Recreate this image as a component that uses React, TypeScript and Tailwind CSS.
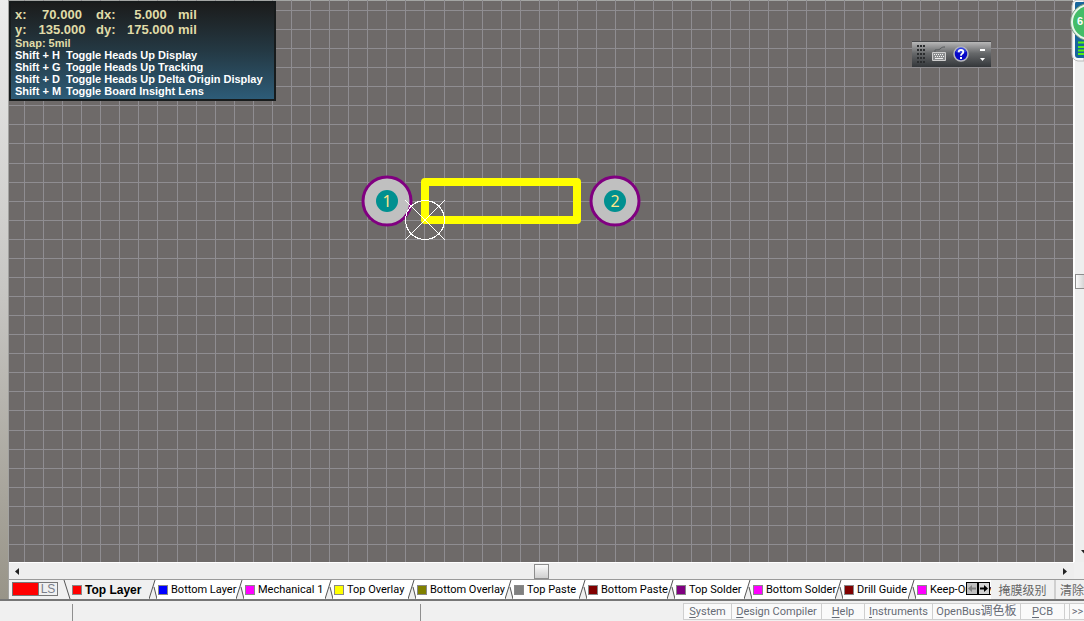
import { useState } from "react"
import clsx from "clsx"

const layers = [
	{ name: "Top Layer", color: "bg-[#ff0000]", width: "w-[86px]" },
	{ name: "Bottom Layer", color: "bg-[#0000ff]", width: "w-[87px]" },
	{ name: "Mechanical 1", color: "bg-[#ff00ff]", width: "w-[89px]" },
	{ name: "Top Overlay", color: "bg-[#ffff00]", width: "w-[83px]" },
	{ name: "Bottom Overlay", color: "bg-[#808000]", width: "w-[97px]" },
	{ name: "Top Paste", color: "bg-[#808080]", width: "w-[74px]" },
	{ name: "Bottom Paste", color: "bg-[#800000]", width: "w-[88px]" },
	{ name: "Top Solder", color: "bg-[#800080]", width: "w-[77px]" },
	{ name: "Bottom Solder", color: "bg-[#ff00ff]", width: "w-[91px]" },
	{ name: "Drill Guide", color: "bg-[#800000]", width: "w-[73px]" },
	{ name: "Keep-Out Layer", color: "bg-[#ff00ff]", width: "w-[83px]" },
]

const shortcuts = [
	{ keys: "Shift + H", action: "Toggle Heads Up Display" },
	{ keys: "Shift + G", action: "Toggle Heads Up Tracking" },
	{ keys: "Shift + D", action: "Toggle Heads Up Delta Origin Display" },
	{ keys: "Shift + M", action: "Toggle Board Insight Lens" },
]

const panels = [
	{ hot: "S", rest: "ystem", width: "w-[48px]" },
	{ hot: "D", rest: "esign Compiler", width: "w-[90px]" },
	{ hot: "H", rest: "elp", width: "w-[43px]" },
	{ hot: "I", rest: "nstruments", width: "w-[68px]" },
	{ hot: "", rest: "OpenBus", cjk: "调色板", width: "w-[88px]" },
	{ hot: "P", rest: "CB", width: "w-[44px]" },
]

// 5 mil snap grid in screen pixels
const GRID_STEP = 19.07
const gridX = Array.from({ length: 140 }, (_, i) => Math.round(15 + i * GRID_STEP))
const gridY = Array.from({ length: 80 }, (_, i) => Math.round(10 + i * GRID_STEP))

function Pad({ x, label }: { x: number; label: string }) {
	return (
		<g>
			<circle cx={x} cy="201" r="24" fill="#c0c0c0" stroke="#800080" strokeWidth="3" />
			<circle cx={x} cy="201" r="11" fill="#009090" />
			<text
				x={x}
				y="207"
				textAnchor="middle"
				className="fill-[#ffe58a] font-['Noto_Sans',sans-serif] text-[16px]"
			>
				{label}
			</text>
		</g>
	)
}

function Board() {
	return (
		<svg className="absolute inset-0 h-full w-full" aria-label="Footprint">
			<g fill="#8f8d91">
				{gridX.map((x) => (
					<rect key={x} x={x} y="0" width="1" height="100%" />
				))}
				{gridY.map((y) => (
					<rect key={y} x="0" y={y} width="100%" height="1" />
				))}
			</g>
			<Pad x={378} label="1" />
			<Pad x={606} label="2" />
			<rect
				x="416"
				y="182"
				width="152"
				height="38"
				fill="none"
				stroke="#ffff00"
				strokeWidth="8"
				strokeLinejoin="round"
			/>
			<g fill="none" stroke="#fff" shapeRendering="crispEdges">
				<circle cx="416" cy="220" r="19.5" />
				<path d="M396 200L436 240M436 200L396 240" />
			</g>
		</svg>
	)
}

function HeadsUp() {
	return (
		<div
			className="absolute left-0 top-px h-[100px] w-[267px] border-2 border-[#171b1c] bg-gradient-to-b from-[#1b1c1c]
				via-[#243944] to-[#2d5c78] pl-1 pt-1 font-bold whitespace-pre text-white"
		>
			<div className="grid grid-cols-[17px_60px_31px_55px_28px] text-[13px] leading-[15px] text-[#e0dca8]">
				<span>x:</span>
				<span className="text-center">70.000</span>
				<span className="pl-1">dx:</span>
				<span className="text-center">5.000</span>
				<span>mil</span>
				<span>y:</span>
				<span className="text-center">135.000</span>
				<span className="pl-1">dy:</span>
				<span className="text-center">175.000</span>
				<span>mil</span>
			</div>
			<div className="text-[11px] leading-[12px] text-[#e0dca8]">Snap: 5mil</div>
			{shortcuts.map(({ keys, action }) => (
				<div key={keys} className="flex text-[11px] leading-[12px]">
					<span className="w-[51px]">{keys}</span>
					<span>{action}</span>
				</div>
			))}
		</div>
	)
}

function FloatingToolbar() {
	return (
		<div
			className="absolute right-[82px] top-[41px] flex h-[26px] w-[79px] items-center border-t border-[#48494b]
				bg-gradient-to-b from-[#b8b8b8] via-[#66686a] via-45% to-[#34373a] pb-px"
		>
			<svg className="ml-1 shrink-0" width="9" height="18" fill="#2b2d2f">
				{[1, 4, 7].map((x) =>
					[0, 4, 8, 12, 16].map((y) => <rect key={`${x}-${y}`} x={x} y={y} width="2" height="2" />)
				)}
			</svg>
			<button aria-label="Keyboard" className="ml-[7px]">
				<svg width="14" height="16" fill="none">
					<path d="M3 6C2 2 6 5 8 3S11 1 13 1" stroke="#55585a" />
					<rect x="0" y="6" width="14" height="9" rx="1" fill="#cfcfcf" />
					<rect x="1" y="7" width="12" height="7" fill="#8b8d8f" />
					<path d="M2 8.500h10M3 10.500h9" stroke="#f4f4f4" strokeDasharray="1 1" />
					<path d="M3 12.500h8" stroke="#eee" />
				</svg>
			</button>
			<button aria-label="Help" className="ml-[7px]">
				<svg width="16" height="16">
					<circle cx="8" cy="8" r="7" fill="#0808c8" stroke="#b7b8bd" strokeWidth="1.500" />
					<path d="M3 6A5 5 0 0 1 13 6Q8 8 3 6" fill="#4a60ef" opacity=".6" />
					<path d="M5.700 6.200Q5.700 4 8 4T10.300 6Q10.300 7 8.800 8Q8 8.500 8 9.700" fill="none" stroke="#fff" strokeWidth="1.800" />
					<rect x="7" y="11" width="2" height="2" fill="#fff" />
				</svg>
			</button>
			<button aria-label="Toolbar options" className="ml-[10px]">
				<svg width="7" height="13" fill="#fff">
					<rect x="1" y="1" width="5" height="2" />
					<path d="M1 10H6L3.500 13Z" />
				</svg>
			</button>
		</div>
	)
}

function DesktopBadge() {
	return (
		<svg className="absolute right-0 top-0" width="14" height="64" aria-label="Memory monitor">
			<path d="M14 0H6Q2 1 2 6V54Q2 60 8 61H14Z" fill="#f8f8f8" stroke="#b9b9b9" />
			<path d="M14 2H6Q5 2 5 4V55Q5 58 8 58H14Z" fill="#17659c" />
			<path d="M8 42.500h6M8 47h6M8 50.500h6M8 54h6" stroke="#57f012" strokeWidth="2" />
			<circle cx="19" cy="22" r="18.500" fill="#43bd68" stroke="#84948a" strokeWidth="1" />
			<circle cx="19" cy="22" r="17" fill="none" stroke="#e9f6ec" strokeWidth="2" />
			<text x="7" y="25" className="fill-white text-[11px] font-bold">
				6
			</text>
		</svg>
	)
}

function Arrow({ dir, className }: { dir: "left" | "right" | "down"; className?: string }) {
	const shapes = {
		left: "M5 0V7L1 3.500Z",
		right: "M1 0V7L5 3.500Z",
		down: "M0 1H7L3.500 5Z",
	}
	return (
		<svg width="7" height="7" className={className} fill="#222">
			<path d={shapes[dir]} />
		</svg>
	)
}

function TabEdge({ first, afterActive }: { first: boolean; afterActive: boolean }) {
	if (first) {
		return (
			<svg width="8" height="19" className="shrink-0 self-start">
				<path d="M1 0L7 19" stroke="#555" />
			</svg>
		)
	}
	return (
		<svg width="8" height="19" className="shrink-0 self-start">
			{afterActive && <path d="M0 0H6L0 19Z" fill="#f0f0f0" />}
			<path d="M0 19L5 3L8 19Z" fill="#f0f0f0" />
			<path d="M0 19L6 0M5 7L8 19" fill="none" stroke="#555" />
		</svg>
	)
}

export default function App() {
	const [active, setActive] = useState(0)

	return (
		<div className="flex min-h-screen flex-col overflow-hidden bg-[#f0f0f0] font-['Liberation_Sans',Arial,sans-serif]">
			<div className="flex flex-1">
				<div className="w-[9px] shrink-0 border-r border-[#a2a2a0] bg-gradient-to-b from-[#ececec] via-[#c6c5c2] to-[#989488]" />
				<div className="flex min-w-0 flex-1 flex-col">
					{/* EDITOR */}
					<div className="relative flex flex-1">
						<div className="relative flex-1 overflow-hidden bg-[#6e6a69] shadow-[inset_0_1px_0_#a3a5a3]">
							<Board />
							<HeadsUp />
							<FloatingToolbar />
						</div>
						<div className="relative flex w-[11px] flex-col items-end justify-center overflow-hidden border-l-2 border-white bg-[#eeeeee]">
							<div className="h-[15px] w-[9px] border border-r-0 border-[#8d8d8d] bg-gradient-to-r from-[#fafafa] to-[#d5d5d5]" />
							<Arrow dir="down" className="absolute -right-1 bottom-[6px]" />
						</div>
						<DesktopBadge />
					</div>

					{/* HORIZONTAL SCROLL */}
					<div className="mr-[10px] flex h-[17px] items-center justify-between border-t border-white bg-[#eeeeee] px-[5px]">
						<Arrow dir="left" />
						<div className="h-[15px] w-[15px] border border-[#8d8d8d] bg-gradient-to-b from-[#fafafa] to-[#d0d0d0]" />
						<Arrow dir="right" />
					</div>

					{/* LAYER TABS */}
					<div className="flex h-[20px] border-t border-[#999]">
						<button className="ml-[3px] mt-[2px] flex h-[14px] w-[46px] shrink-0 border border-[#777]" aria-label="Layer sets">
							<span className="h-full w-[25px] bg-[#ff0000]" />
							<span className="flex-1 border-l border-[#777] text-center text-[12px] leading-[13px] text-[#7b7f8a]">LS</span>
						</button>
						<div className="relative ml-[5px] min-w-0 flex-1 overflow-hidden">
							<div role="tablist" className="flex h-full bg-white">
								{layers.map((layer, i) => (
									<button
										key={layer.name}
										role="tab"
										aria-selected={i === active}
										onClick={() => setActive(i)}
										className={clsx(
											"flex shrink-0 items-center whitespace-nowrap text-black last:overflow-hidden",
											layer.width,
											i === active
												? "bg-[#f0f0f0] text-[12px] font-bold"
												: "font-[Roboto,sans-serif] text-[11px]"
										)}
									>
										<TabEdge first={i === 0} afterActive={i === active + 1} />
										<span className={clsx("ml-px mr-[3px] h-[10px] w-[10px] shrink-0 border border-[#888]", layer.color)} />
										<span className={clsx("leading-[16px]", i === layers.length - 1 && "min-w-0 overflow-hidden")}>
											{layer.name}
										</span>
									</button>
								))}
							</div>
							<div className="absolute right-px top-[2px] flex">
								<button aria-label="Scroll tabs left" className="h-[13px] w-[12px] border border-black bg-[#c0c0c0]">
									<svg width="10" height="11" fill="#808080">
										<path d="M1 5.500L5 2V4.500H9V6.500H5V9Z" />
									</svg>
								</button>
								<button aria-label="Scroll tabs right" className="h-[13px] w-[12px] border border-black bg-[#d4d4d4]">
									<svg width="10" height="11" fill="#000">
										<path d="M9 5.500L5 2V4.500H1V6.500H5V9Z" />
									</svg>
								</button>
							</div>
						</div>
						<button className="w-[65px] border-r-2 border-[#cfcfcf] font-['Noto_Sans_CJK_SC',sans-serif] text-[12px] leading-[18px] text-[#666]">
							掩膜级别
						</button>
						<button className="w-[28px] overflow-hidden whitespace-nowrap pl-1 text-left font-['Noto_Sans_CJK_SC',sans-serif] text-[12px] leading-[18px] text-[#666]">
							清除
						</button>
					</div>
				</div>
			</div>

			{/* STATUS BAR */}
			<div className="flex h-[22px] border-t-2 border-[#767676]">
				<div className="mt-[3px] w-[73px] shrink-0 border-r border-[#8f8f8f]" />
				<div className="mt-[3px] w-[348px] shrink-0 border-r border-[#8f8f8f]" />
				<div className="flex-1" />
				<div className="mb-px mt-[2px] flex border-y border-l border-[#cfcfcf] bg-[#fafafa] font-[Roboto,'Noto_Sans_CJK_SC',sans-serif] text-[11px] leading-[15px] text-[#666b75]">
					{panels.map((panel) => (
						<button
							key={panel.rest}
							className={clsx("shrink-0 whitespace-nowrap border-r border-[#cfcfcf]", panel.width)}
						>
							<span className="underline underline-offset-2">{panel.hot}</span>
							{panel.rest}
							{panel.cjk && <span className="text-[12px]">{panel.cjk}</span>}
						</button>
					))}
					<button aria-label="More panels" className="ml-1 w-[15px] overflow-hidden border-l border-[#cfcfcf] pl-px">
						&gt;&gt;
					</button>
				</div>
			</div>
		</div>
	)
}
